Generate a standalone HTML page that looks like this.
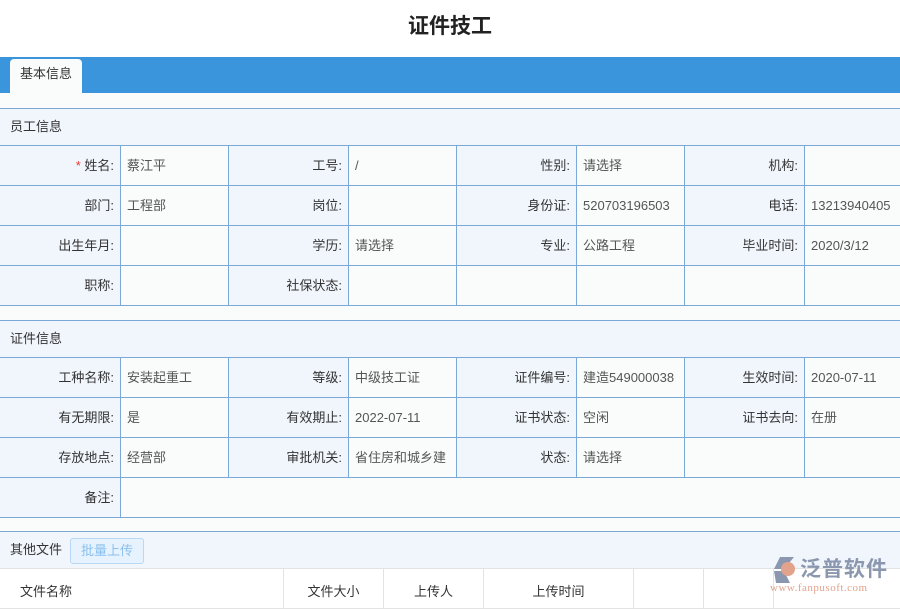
<!DOCTYPE html>
<html><head><meta charset="utf-8"><style>
*{margin:0;padding:0;box-sizing:border-box}
body{width:900px;height:600px;overflow:hidden;background:#fff;font-family:"Liberation Sans","Noto Sans CJK SC",sans-serif;font-size:13px;color:#333;position:relative}
.title{position:absolute;top:0;left:0;width:900px;height:57px;line-height:54px;text-align:center;font-size:21px;font-weight:bold;color:#222}
.bar{position:absolute;top:57px;left:0;width:900px;height:36px;background:#3a95dc}
.tab{position:absolute;top:59px;left:10px;width:72px;height:34px;background:#fafcfc;border-radius:4px 4px 0 0;text-align:center;line-height:30px;font-size:13px}
.bg{position:absolute;top:93px;left:0;width:900px;height:507px;background:#fafcfc}
.sh{position:absolute;left:0;width:900px;height:37px;background:#f1f6fd;border-top:1px solid #7aa9d8;line-height:36px;padding-left:10px}
table{position:absolute;left:-1px;border-collapse:collapse;table-layout:fixed}
td{height:40px;border:1px solid #7aa9d8;padding:0 6px;white-space:nowrap;line-height:20px;vertical-align:middle}
td.l{background:#f1f6fd;text-align:right}
td.v{background:#fafcfc;color:#555}
.star{color:#e33}
.btn{display:inline-block;margin-left:8px;padding:0 10px;height:26px;line-height:24px;border:1px solid #b8d8f5;background:#e6f2fd;color:#8ac0ee;border-radius:3px;vertical-align:middle}
.ft td{height:40px;border:1px solid #e3e3e3;background:#fff;text-align:center;color:#333;vertical-align:bottom;padding-bottom:6px}
</style></head><body>
<div class="title">证件技工</div>
<div class="bar"></div>
<div class="tab">基本信息</div>
<div class="bg"></div>
<div class="sh" style="top:108px">员工信息</div>
<table style="top:145px;width:902px">
<colgroup><col style="width:121px"><col style="width:108px"><col style="width:120px"><col style="width:108px"><col style="width:120px"><col style="width:108px"><col style="width:120px"><col style="width:97px"></colgroup>
<tr><td class="l"><span class="star">*</span> 姓名:</td><td class="v">蔡江平</td><td class="l">工号:</td><td class="v">/</td><td class="l">性别:</td><td class="v">请选择</td><td class="l">机构:</td><td class="v"></td></tr>
<tr><td class="l">部门:</td><td class="v">工程部</td><td class="l">岗位:</td><td class="v"></td><td class="l">身份证:</td><td class="v">520703196503</td><td class="l">电话:</td><td class="v">13213940405</td></tr>
<tr><td class="l">出生年月:</td><td class="v"></td><td class="l">学历:</td><td class="v">请选择</td><td class="l">专业:</td><td class="v">公路工程</td><td class="l">毕业时间:</td><td class="v">2020/3/12</td></tr>
<tr><td class="l">职称:</td><td class="v"></td><td class="l">社保状态:</td><td class="v"></td><td class="v"></td><td class="v"></td><td class="v"></td><td class="v"></td></tr>
</table>
<div class="sh" style="top:320px">证件信息</div>
<table style="top:357px;width:902px">
<colgroup><col style="width:121px"><col style="width:108px"><col style="width:120px"><col style="width:108px"><col style="width:120px"><col style="width:108px"><col style="width:120px"><col style="width:97px"></colgroup>
<tr><td class="l">工种名称:</td><td class="v">安装起重工</td><td class="l">等级:</td><td class="v">中级技工证</td><td class="l">证件编号:</td><td class="v">建造549000038</td><td class="l">生效时间:</td><td class="v">2020-07-11</td></tr>
<tr><td class="l">有无期限:</td><td class="v">是</td><td class="l">有效期止:</td><td class="v">2022-07-11</td><td class="l">证书状态:</td><td class="v">空闲</td><td class="l">证书去向:</td><td class="v">在册</td></tr>
<tr><td class="l">存放地点:</td><td class="v">经营部</td><td class="l">审批机关:</td><td class="v">省住房和城乡建</td><td class="l">状态:</td><td class="v">请选择</td><td class="v"></td><td class="v"></td></tr>
<tr><td class="l">备注:</td><td class="v" colspan="7"></td></tr>
</table>
<div class="sh" style="top:531px;height:38px">其他文件<span class="btn">批量上传</span></div>
<table class="ft" style="top:568px;width:902px">
<colgroup><col style="width:284px"><col style="width:100px"><col style="width:100px"><col style="width:150px"><col style="width:70px"><col style="width:70px"><col style="width:128px"></colgroup>
<tr><td style="text-align:left;padding-left:20px">文件名称</td><td>文件大小</td><td>上传人</td><td>上传时间</td><td></td><td></td><td></td></tr>
</table>
<div style="position:absolute;left:770px;top:553px;width:130px;height:47px">
<svg width="30" height="30" viewBox="0 0 30 30" style="position:absolute;left:0;top:2px"><path d="M10 2 L24 2 L14 14 L4 14 Z" fill="#8a97ae"/><path d="M4 16 L14 16 L20 28 L6 28 Z" fill="#8a97ae"/><circle cx="18" cy="14" r="7" fill="#e1a38c"/></svg>
<div style="position:absolute;left:30px;top:0;font-size:21px;color:#8a97ae;font-weight:bold;letter-spacing:1px">泛普软件</div>
<div style="position:absolute;left:0;top:29px;font-size:11px;color:#e1a38c;font-family:'Liberation Serif',serif;letter-spacing:0.5px">www.fanpusoft.com</div>
</div>
</body></html>
